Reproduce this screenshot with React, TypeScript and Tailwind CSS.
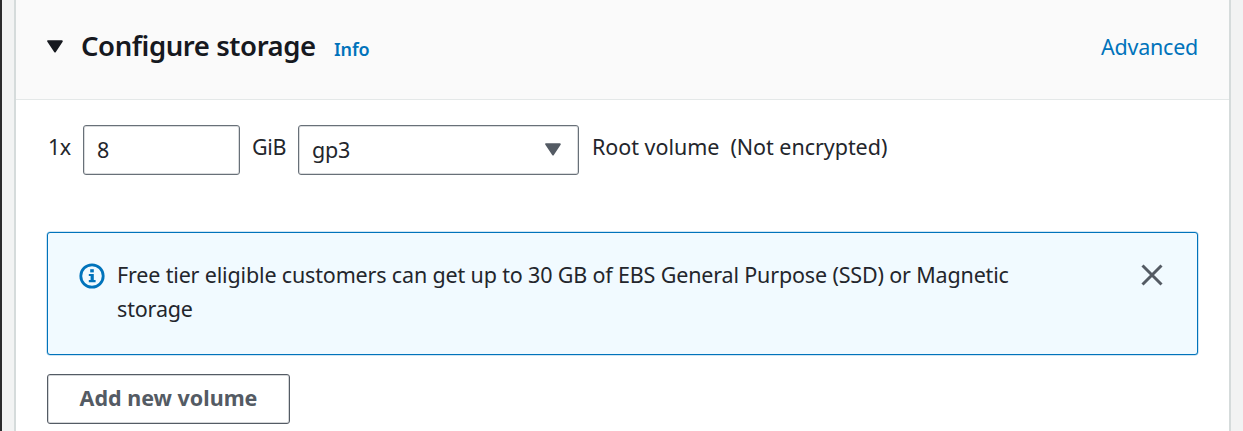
import React from "react";

function Caret({ className }: { className: string }) {
  return (
    <svg viewBox="0 0 16 13" className={className} fill="currentColor" stroke="currentColor" strokeWidth="2" strokeLinejoin="round" aria-hidden="true">
      <path d="M1.2 1.2h13.6L8 11.4z" />
    </svg>
  );
}

function InfoIcon() {
  return (
    <svg viewBox="0 0 26 26" className="mt-[30px] ml-[31px] h-[26px] w-[26px] shrink-0 text-[#0073bb]" fill="none" stroke="currentColor" aria-hidden="true">
      <circle cx="13" cy="13" r="11.2" strokeWidth="2.8" />
      <path d="M13 6.2v3.2" strokeWidth="3.6" />
      <path d="M9.8 12h4M9.8 18.2h6.8" strokeWidth="2.2" />
      <path d="M13.2 11v7.5" strokeWidth="3.2" />
    </svg>
  );
}

export default function App() {
  return (
    <div className="flex h-[431px] w-full overflow-hidden bg-[#f2f3f3] font-['Noto_Sans','Open_Sans',sans-serif] text-[21.5px] leading-[34px] text-[#23262c] font-stretch-semi-condensed">
      <div className="w-[2px] shrink-0 bg-[#2b2b2d]" />
      <main className="ml-[12px] mr-[12px] flex min-w-0 flex-1 flex-col border-x-2 border-[#d5dbdb] bg-white">
        <header className="flex h-[100px] shrink-0 items-start border-b border-[#e4e8e8] bg-[#fafafa] pr-[31px] pl-[31px] whitespace-nowrap">
          <Caret className="mt-[40px] h-[13px] w-[16px] text-[#16191f]" />
          <h1 className="mt-[29px] ml-[18px] w-[253px] text-[27.5px] font-semibold tracking-[-0.42px] text-[#16191f]">Configure storage</h1>
          <a className="mt-[32px] text-[18px] font-semibold tracking-[-0.1px] text-[#0073bb]">Info</a>
          <a className="mt-[30px] ml-auto tracking-[-0.25px] text-[#0073bb]">Advanced</a>
        </header>
        <div className="flex h-[75px] shrink-0 items-end pl-[32px] whitespace-nowrap">
          <span className="mb-[11px] w-[35px] tracking-[-0.5px]">1x</span>
          <div className="flex h-[50px] w-[156.5px] items-center rounded-[3px] border border-[#687078] pl-[13px] shadow-[inset_0_0_0_1px_#68707840]">8</div>
          <span className="mb-[11px] ml-[12.5px] w-[46px] tracking-[-0.4px]">GiB</span>
          <div className="flex h-[50px] w-[281px] items-center justify-between rounded-[3px] border border-[#687078] pr-[17px] pb-[1px] pl-[13px] tracking-[-0.2px] shadow-[inset_0_0_0_1px_#68707840]">
            gp3
            <Caret className="h-[13px] w-[16px] text-[#545b64]" />
          </div>
          <span className="mb-[11px] ml-[13px] tracking-[-0.04px] whitespace-pre">Root volume  (Not encrypted)</span>
        </div>
        <section className="mt-[57px] mr-[31px] ml-[31px] flex h-[123px] shrink-0 items-start rounded-[3px] border border-[#0073bb] bg-[#f1faff] shadow-[0_0_0_0.5px_#0073bb60]">
          <InfoIcon />
          <p className="mt-[25px] ml-[12px] tracking-[-0.16px] whitespace-nowrap">
            Free tier eligible customers can get up to 30 GB of EBS General Purpose (SSD) or Magnetic
            <br />
            storage
          </p>
          <svg viewBox="0 0 22 22" className="mt-[31px] mr-[34px] ml-auto h-[22px] w-[22px] shrink-0 text-[#545b64]" fill="none" stroke="currentColor" strokeWidth="3" aria-label="Dismiss">
            <path d="M1.5 1.5l19 19M20.5 1.5l-19 19" />
          </svg>
        </section>
        <button className="mt-[19px] ml-[31px] flex h-[50px] w-[243px] shrink-0 items-center justify-center rounded-[3px] border border-[#545b64] bg-white pb-[2px] font-bold whitespace-nowrap text-[#545b64] shadow-[inset_0_0_0_1px_#545b6440]">
          Add new volume
        </button>
      </main>
    </div>
  );
}
